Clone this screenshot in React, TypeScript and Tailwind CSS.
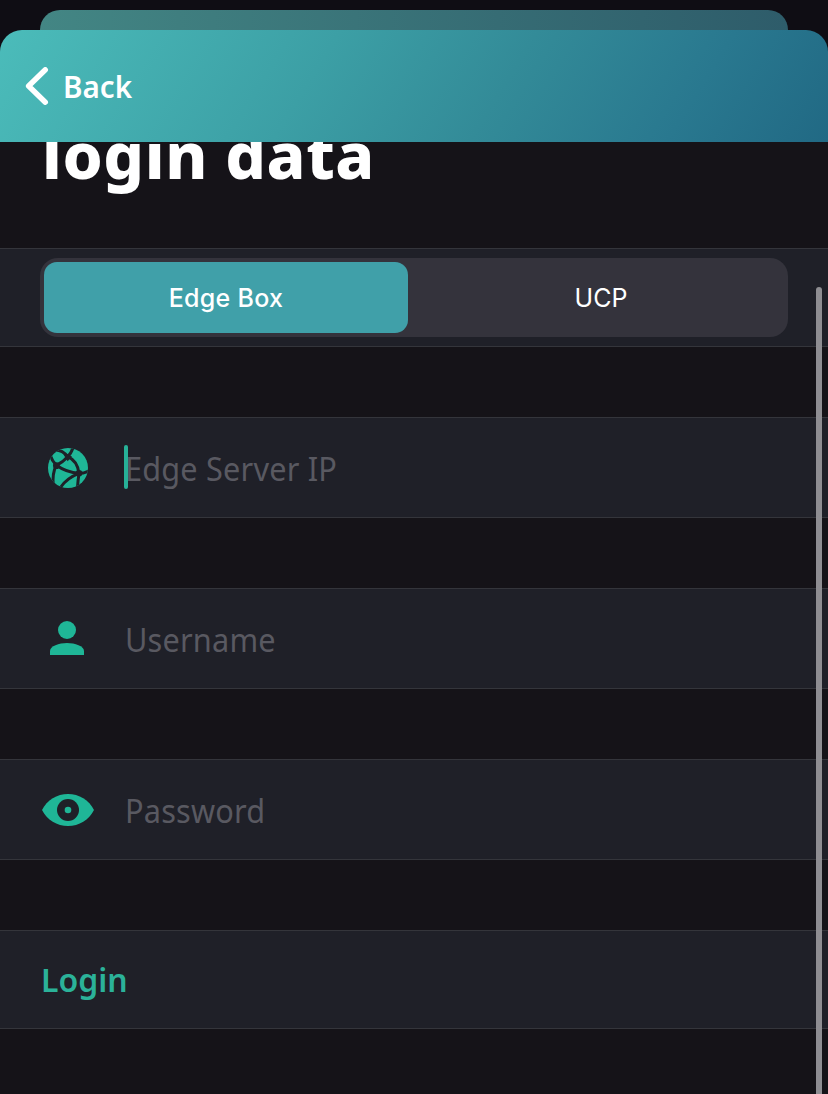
import type { ReactNode } from "react";

function GlobeIcon() {
  return (
    <svg width="40" height="40" viewBox="54 54 120 120" className="ml-2" aria-hidden="true">
      <defs>
        <clipPath id="disc">
          <circle cx="114" cy="114" r="60" />
        </clipPath>
      </defs>
      <circle cx="114" cy="114" r="60" fill="#1fb697" />
      <g clipPath="url(#disc)" fill="none" stroke="#1f2028" strokeWidth="9">
        <path d="M76 60 Q98 60 113 80 Q124 70 130 50" />
        <path d="M113 80 Q142 92 147 130 Q144 150 142 178" />
        <path d="M113 80 Q100 96 79 106 Q110 128 147 130" />
        <path d="M60 74 Q66 92 79 106 Q66 130 70 168" />
        <path d="M147 130 Q110 144 90 174" />
        <path d="M147 130 Q162 130 178 122" />
        <path d="M100 73 L113 94 L126 79 Z" fill="#1f2028" stroke="none" />
        <circle cx="147" cy="130" r="10" fill="#1f2028" stroke="none" />
        <circle cx="79" cy="107" r="10" fill="#1f2028" stroke="none" />
      </g>
    </svg>
  );
}

function PersonIcon() {
  return (
    <svg width="34" height="34" viewBox="0 0 34 34" fill="#1fb697" className="ml-2.5 -mt-0.5" aria-hidden="true">
      <circle cx="17" cy="9" r="9" />
      <path d="M0 34v-4C0 25 9 22 17 22s17 3 17 8v4z" />
    </svg>
  );
}

function EyeIcon() {
  return (
    <svg width="52" height="32" viewBox="0 0 52 32" className="ml-0.5" aria-hidden="true">
      <path d="M0 16C5 6 15 0 26 0s21 6 26 16C47 26 37 32 26 32S5 26 0 16z" fill="#1fb697" />
      <circle cx="26" cy="16" r="11" fill="#1f2028" />
      <circle cx="26" cy="16" r="3.3" fill="#1fb697" />
    </svg>
  );
}

function Field({ icon, label, focused = false }: { icon: ReactNode; label: string; focused?: boolean }) {
  return (
    <div className="relative mt-[70px] flex h-[101px] items-center border-y border-[#34353b] bg-[#1f2028] pl-10">
      <div className="flex w-[84.5px] shrink-0 items-center">{icon}</div>
      <span className="origin-left scale-x-[0.93] pt-[2px] text-[33px] leading-none tracking-[0.2px] text-[#595961]">{label}</span>
      {focused && <span className="absolute left-[124px] top-[27px] h-11 w-1 rounded-[2px] bg-[#27b198]" />}
    </div>
  );
}

export default function App() {
  return (
    <div className="relative h-[1094px] w-[828px] overflow-hidden bg-[#151318] font-['Noto_Sans',sans-serif]">
      <div className="h-[142px] bg-[#0f0d14] pt-[10px]">
        <div className="mx-10 h-5 rounded-t-[20px] bg-linear-to-r from-[#438684] to-[#2e5c6a]" />
        <header className="flex h-28 items-center rounded-t-[22px] bg-[linear-gradient(122deg,#4bbcba_0%,#3c9fa5_38%,#338b98_60%,#29788f_82%,#216984_100%)] pl-[25px]">
          <svg width="24" height="38" viewBox="0 0 24 38" fill="none" stroke="#fff" strokeWidth="5.4" strokeLinecap="round" strokeLinejoin="round" aria-hidden="true">
            <path d="M20.300 2.800L3.600 19L20.300 35.200" />
          </svg>
          <span className="ml-[14px] origin-left scale-x-[0.97] pt-px text-[30.5px] font-semibold leading-none text-white">Back</span>
        </header>
      </div>

      <div className="h-[106px] overflow-hidden pl-[42px]">
        <h1 className="-mt-[19px] text-[64px] font-extrabold leading-[64px] tracking-[0.6px] text-white">login data</h1>
      </div>

      <div className="h-[99px] border-y border-[#34353b] bg-[#1f2028] px-10 pt-[9px]">
        <div className="flex h-[79px] rounded-[18px] bg-[#34333c] p-1 font-['Inter',sans-serif] text-[25px] text-white">
          <div className="flex w-[364px] items-center justify-center rounded-[13px] bg-[#40a0a9] pt-0.5 font-medium tracking-[0.3px]">Edge Box</div>
          <div className="flex flex-1 items-center justify-center pl-2.5 pt-0.5">UCP</div>
        </div>
      </div>

      <Field icon={<GlobeIcon />} label="Edge Server IP" focused />
      <Field icon={<PersonIcon />} label="Username" />
      <Field icon={<EyeIcon />} label="Password" />

      <div className="mt-[70px] flex h-[99px] items-center border-y border-[#34353b] bg-[#1f2028] pl-[40.7px]">
        <span className="origin-left scale-x-[0.97] text-[33px] font-semibold leading-none text-[#2bb299]">Login</span>
      </div>

      <div className="absolute left-[816px] top-[287px] h-[820px] w-1.5 rounded-full bg-[#8e8d92]" />
    </div>
  );
}
